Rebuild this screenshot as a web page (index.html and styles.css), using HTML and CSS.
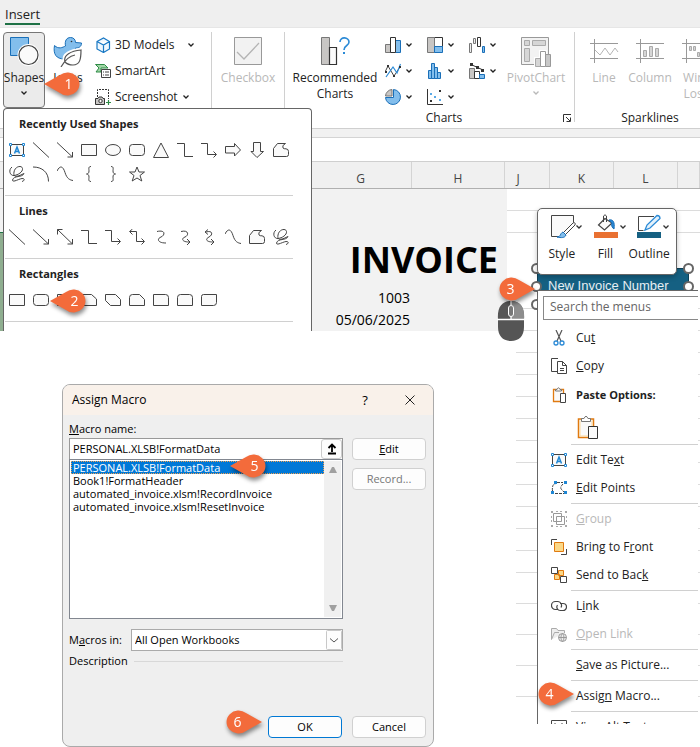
FILE: index.html
```html
<!DOCTYPE html>
<html lang="en">
<head>
<meta charset="utf-8">
<title>Assign a macro to a shape</title>
<link rel="stylesheet" href="styles.css">
</head>
<body>
<svg class="defs" aria-hidden="true">
  <symbol id="chev" viewBox="0 0 8 6"><path d="M1.500 1.500 4 4l2.500-2.500" fill="none" stroke="currentColor" stroke-width="1.300"/></symbol>
  <symbol id="line" viewBox="0 0 16 16"><path d="M0 0.500 16 15.500"/></symbol>
  <symbol id="arrow" viewBox="0 0 16 16"><path d="M0 .5 15.500 15M15.500 10v5h-5"/></symbol>
  <symbol id="arrow2" viewBox="0 0 16 16"><path d="M.5.5 15.500 15M15.500 10v5h-5M.5 5.500v-5h5"/></symbol>
  <symbol id="rect" viewBox="0 0 16 16"><path class="f" d="M.5 2.500h15v11H.5z"/></symbol>
  <symbol id="oval" viewBox="0 0 16 16"><ellipse class="f" cx="8" cy="8" rx="7.500" ry="5.500"/></symbol>
  <symbol id="round" viewBox="0 0 16 16"><rect class="f" x=".5" y="2.500" width="15" height="11" rx="3"/></symbol>
  <symbol id="tri" viewBox="0 0 16 16"><path class="f" d="M8 1 15.500 15.500H.5z"/></symbol>
  <symbol id="elbow" viewBox="0 0 16 16"><path d="M0 1.500h7.500v13H16"/></symbol>
  <symbol id="elbowA" viewBox="0 0 16 16"><path d="M0 1.500h6.500v11H15M12.500 9.500l3 3-3 3"/></symbol>
  <symbol id="elbowB" viewBox="0 0 16 16"><path d="M1 2.500h6.500v10H15M12.500 9.500l3 3-3 3M3.500 0 .5 2.500l3 3"/></symbol>
  <symbol id="rarrow" viewBox="0 0 16 16"><path class="f" d="M.5 4.500h9v-3L15.500 8l-6 6v-3h-9z"/></symbol>
  <symbol id="darrow" viewBox="0 0 16 16"><path class="f" d="M4.500.5h7v9h3L8 15.500l-6-6h2.500z"/></symbol>
  <symbol id="free" viewBox="0 0 16 16"><path class="f" d="M.5 14.500V6.500L4.500 1.500h8q-4 2-2.500 4.500 1 1 3 .8 2.500.2 2.500 2.700v3q0 2-2 2z"/></symbol>
  <symbol id="scrib" viewBox="0 0 16 16"><path d="M3 1C-1 4 1 10 5 9.500S14 6 13.500 2.500 6 0 5 6s3 5 10 1.500M15 7.500C13 12 5 9 3.500 14c0 3 6-1 9.500-1.500 3 0 3 2 0 3"/></symbol>
  <symbol id="arc" viewBox="0 0 16 16"><path d="M0 1c9 0 15.500 5 15.500 14.500"/></symbol>
  <symbol id="curve" viewBox="0 0 16 16"><path d="M0 5C3-1 6 0 8 6.500S13 14 16 14.500"/></symbol>
  <symbol id="lbrace" viewBox="0 0 16 16"><path d="M10 .5C7 .5 8 3 8 5S7 8 5.500 8C7 8 8 9 8 11s-1 4.500 2 4.500"/></symbol>
  <symbol id="rbrace" viewBox="0 0 16 16"><path d="M6 .5C9 .5 8 3 8 5s1 3 2.500 3C9 8 8 9 8 11s1 4.500-2 4.500"/></symbol>
  <symbol id="star" viewBox="0 0 16 16"><path class="f" d="M8 1l2 5h5.500l-4.500 3.500 1.800 5.500L8 12l-4.800 3L5 9.500.5 6H6z"/></symbol>
  <symbol id="scon" viewBox="0 0 16 16"><path d="M4 2.500c9-2 8 4 4 5.500s-4 6 5 6"/></symbol>
  <symbol id="sconA" viewBox="0 0 16 16"><path d="M4 2.500c8-2 8 4 4 5.500s-3 5 4 5M10 10l3 3-3 3"/></symbol>
  <symbol id="sconB" viewBox="0 0 16 16"><path d="M5 3c7-2 7 3 3 5s-3 5 4 5M10 10l3 3-3 3M7 .5l-3 2.500 3 2.500"/></symbol>
  <symbol id="snip1" viewBox="0 0 16 16"><path class="f" d="M.5 2.500h10l5 4.500v6.500H.5z"/></symbol>
  <symbol id="snip2" viewBox="0 0 16 16"><path class="f" d="M.5 2.500h10l5 5v6h-10l-5-5z"/></symbol>
  <symbol id="snipr" viewBox="0 0 16 16"><path class="f" d="M3.500 2.500h7l5 5v6H.5v-8q0-3 3-3z"/></symbol>
  <symbol id="rnd1" viewBox="0 0 16 16"><path class="f" d="M.5 2.500h12q3 0 3 3v8H.5z"/></symbol>
  <symbol id="rnd2" viewBox="0 0 16 16"><path class="f" d="M3.500 2.500h9q3 0 3 3v8H.5v-8q0-3 3-3z"/></symbol>
  <symbol id="rnd3" viewBox="0 0 16 16"><path class="f" d="M2.500 2.500h13v8q0 3-3 3h-12v-9q0-2 2-2z"/></symbol>
  <symbol id="textbox" viewBox="0 0 16 16"><path d="M1.500 2.500h13v11h-13z" fill="#fafafa" stroke="#444"/><path d="M5.500 11.500 8 5l2.500 6.500M6.500 9.500h3" fill="none" stroke="#1f87d4" stroke-width="1.500"/><path d="M.5 1.500h2v2h-2zM13.500 1.500h2v2h-2zM.5 12.500h2v2h-2zM13.500 12.500h2v2h-2z" fill="#fff" stroke="#1f87d4"/></symbol>
  <symbol id="tipLeft" viewBox="0 0 37 24"><path d="M0 12 16 3a12 11.500 0 1 1 0 18z" fill="#f36b3b"/></symbol>
  <symbol id="tipRight" viewBox="0 0 37 24"><path d="M37 12 21 3a12 11.500 0 1 0 0 18z" fill="#f36b3b"/></symbol>
</svg>

<div class="workbook">
  <nav class="tabs"><a href="#insert" class="tab">Insert</a></nav>

  <div class="ribbon" id="insert">
    <section class="group illus">
      <div class="tools">
        <button class="big picked">
          <svg class="i30" viewBox="0 0 30 30"><path d="M1.500.5h18v18h-18z" fill="#83beec" stroke="#1a6fb8"/><circle cx="19.500" cy="18" r="11" fill="#fff"/><circle cx="19.500" cy="18" r="9.500" fill="#fafafa" stroke="#444" stroke-width="1.200"/></svg>
          <span>Shapes</span><svg class="chev"><use href="#chev"/></svg>
        </button>
        <button class="big">
          <svg class="i30" viewBox="0 0 30 30"><path d="M1.500 8.500c4 4 8 2 11 .5-1-5 1-8.500 5-8.500 3 0 5 2 5 5l6 .5c0 4-3 5-6 5 3 9-5 12-11 11C3 22 0 17 1.500 8.500z" fill="#83beec" stroke="#1a6fb8"/><circle cx="18.500" cy="4.500" r=".8" fill="#333"/><path d="M12 25c-3-8 6-11 16-12 0 9-1 15-8 15-4 0-6-1-8-3z" fill="#fff" stroke="#fff" stroke-width="4"/><path d="M8 30c4-7 8-11 14-12M12 25c-2-7 6-11 16-12 0 9-1 15-8 15-4 0-6-1-8-3z" fill="none" stroke="#555" stroke-width="1.200"/></svg>
          <span>Icons</span>
        </button>
        <div class="stack">
          <button class="row wide"><svg class="i16" viewBox="0 0 16 16"><path d="M2 4.500 8.500 1l6 3.500v7.500L8.500 15.500 2 12zM2 4.500l6.500 3.500 6-3.500M8.500 8v7.500" fill="#eff7fd" stroke="#1878c4" stroke-width="1.200"/></svg><span>3D Models</span><svg class="chev"><use href="#chev"/></svg></button>
          <button class="row"><svg class="i16" viewBox="0 0 16 16"><path d="M.5 1.500h9L13 5H6v4H1l3-4z" fill="#9fd5a5" stroke="#2e8b46"/><path d="M6.500 6.500h9v8h-9z" fill="#fff" stroke="#444"/><path d="M8 9h1M10 9h4M8 12h1M10 12h4" stroke="#444"/></svg><span>SmartArt</span></button>
          <button class="row shot"><svg class="i16" viewBox="0 0 16 16"><path d="M2.500 8V.5h11V10" fill="none" stroke="#333" stroke-dasharray="2 1"/><path d="M.5 9.500H3l1-1.500h3l1 1.500h1.500v6h-9z" fill="#c8c6c4" stroke="#333"/><circle cx="5.500" cy="12" r="1.700" fill="#fff" stroke="#333"/><path d="M13.500 11v5M11 13.500h5" stroke="#2e8b46" stroke-width="1.200"/></svg><span>Screenshot</span><svg class="chev"><use href="#chev"/></svg></button>
        </div>
      </div>
    </section>
    <section class="group controls">
      <div class="tools">
        <button class="big off" disabled><svg class="i30" viewBox="0 0 30 30"><path d="M1.500.5h27v27h-27z" fill="#f2f2f2" stroke="#999"/><path d="M4 15l7 7L26 6" fill="none" stroke="#b4b4b4" stroke-width="1.300"/></svg><span>Checkbox</span></button>
      </div>
    </section>
    <section class="group charts">
      <div class="tools">
        <button class="big rec"><svg class="i30" viewBox="0 0 30 30"><path d="M1.500.5h8v27h-8z" fill="#c8c6c4" stroke="#777"/><path d="M9.500 10.500h7v17h-7z" fill="#fafafa" stroke="#333" stroke-width="1.200"/><path d="M20 5c0-6 9-5 9 0 0 4-5 3-5 8" fill="none" stroke="#2b8ad6" stroke-width="1.600"/><path d="M23 15h2v2h-2z" fill="#2b8ad6"/></svg><span>Recommended<br>Charts</span></button>
        <div class="minis">
          <button aria-label="Column chart"><svg class="i16" viewBox="0 0 16 16"><path d="M.5 7.500h5v8h-5z" fill="#c8c6c4" stroke="#777"/><path d="M10.500 3.500h5v12h-5z" fill="#83beec" stroke="#1a6fb8"/><path d="M5.500.5h5v15h-5z" fill="#fff" stroke="#333"/></svg><svg class="chev"><use href="#chev"/></svg></button>
          <button aria-label="Hierarchy chart"><svg class="i16" viewBox="0 0 16 16"><path d="M7.500.5h8v9h-8z" fill="#fff" stroke="#333"/><path d="M.5.5h7v15h-7z" fill="#c8c6c4" stroke="#777"/><path d="M7.500 9.500h8v6h-8z" fill="#83beec" stroke="#1a6fb8"/></svg><svg class="chev"><use href="#chev"/></svg></button>
          <button aria-label="Waterfall chart"><svg class="i16" viewBox="0 0 16 16"><path d="M.5 6.500h2v9h-2zM4.500 1.500h2v5h-2z" fill="#eee" stroke="#777"/><path d="M8.500.5h3v9h-3z" fill="#fff" stroke="#333"/><path d="M13.500 9.500h2v6h-2z" fill="#83beec" stroke="#1a6fb8"/></svg><svg class="chev"><use href="#chev"/></svg></button>
          <button aria-label="Line chart"><svg class="i16" viewBox="0 0 16 16"><path d="M.5 8 3 3l6 10 6-9" fill="none" stroke="#444"/><path d="M1 14 8 4l4 6 3.500-9" fill="none" stroke="#2b8ad6" stroke-width="1.200"/><path d="M2 2h2v2H2zM8 12h2v2H8zM14 3h2v2h-2zM0 8h2v2H0z" fill="#333"/></svg><svg class="chev"><use href="#chev"/></svg></button>
          <button aria-label="Histogram"><svg class="i16" viewBox="0 0 16 16"><path d="M1.500 7.500h3v8h-3zM4.500.5h3v15h-3zM7.500 4.500h3v11h-3zM10.500 9.500h3v6h-3z" fill="#83beec" stroke="#1a6fb8"/></svg><svg class="chev"><use href="#chev"/></svg></button>
          <button aria-label="Combo chart"><svg class="i16" viewBox="0 0 16 16"><path d="M.5 5.500h5v10h-5z" fill="#c8c6c4" stroke="#777"/><path d="M5.500 8.500h5v7h-5z" fill="#fff" stroke="#333"/><path d="M10.500 11.500h5v4h-5z" fill="#83beec" stroke="#1a6fb8"/><path d="M2 1.500 14 7" stroke="#333"/><path d="M1 0h3v3H1zM7 3h3v3H7zM12 6h3v3h-3z" fill="#333"/></svg><svg class="chev"><use href="#chev"/></svg></button>
          <button aria-label="Pie chart"><svg class="i16" viewBox="0 0 16 16"><path d="M8.500.5a7.500 7.500 0 1 1-8 8h8z" fill="#83beec" stroke="#1a6fb8"/><path d="M7.500-1v9H-1V-1z" fill="#fff"/><path d="M7 .5A7 7 0 0 0 .5 7H7z" fill="#c8c6c4" stroke="#777"/></svg><svg class="chev"><use href="#chev"/></svg></button>
          <button aria-label="Scatter chart"><svg class="i16" viewBox="0 0 16 16"><path d="M.5 0v15.500H16" fill="none" stroke="#333"/><path d="M12 1h2v2h-2zM3 11h2v2H3z" fill="#333"/><path d="M3 4h2v2H3zM7 7h2v2H7zM12 10h2v2h-2z" fill="#5aa9e6"/></svg><svg class="chev"><use href="#chev"/></svg></button>
        </div>
        <button class="big pivot off" disabled><svg class="i30" viewBox="0 0 30 30"><path d="M.5.5h27v27H.5z" fill="#f2f2f2" stroke="#999"/><path d="M3.500 3.500h5v5h-5zM11.500 3.500h13v5h-13zM3.500 11.500h5v13h-5z" fill="#d6d6d6" stroke="#aaa"/><path d="M13 20h5v-7h8v4h4v13H13z" fill="#fff"/><path d="M14.500 21.500h5v8h-5z" fill="#d6d6d6" stroke="#aaa"/><path d="M24.500 17.500h5v12h-5z" fill="#c8c8c8" stroke="#999"/><path d="M19.500 14.500h5v15h-5z" fill="#fff" stroke="#999"/></svg><span>PivotChart</span><svg class="chev"><use href="#chev"/></svg></button>
      </div>
      <footer><span>Charts</span><button class="launch" aria-label="Chart options"><svg viewBox="0 0 8 8"><path d="M.5 8V.5H8M3 3l4 4M7.500 3.500v4h-4" fill="none" stroke="#333"/></svg></button></footer>
    </section>
    <section class="group sparks">
      <div class="tools">
        <button class="big off" disabled><svg class="i30" viewBox="0 0 30 30"><path d="M1 6.500h28M1 21.500h28M5.500 2v24" stroke="#999" fill="none"/><path d="M6 13l5 5 5-7 5 7 5-7 3 4" fill="none" stroke="#b5b5b5"/></svg><span>Line</span></button>
        <button class="big off" disabled><svg class="i30" viewBox="0 0 30 30"><path d="M1 6.500h28M1 21.500h28M5.500 2v24" stroke="#999" fill="none"/><path d="M8.500 13.500h3v6h-3zM14.500 9.500h3v10h-3zM20.500 11.500h3v8h-3z" fill="#d6d6d6" stroke="#aaa"/></svg><span>Column</span></button>
        <button class="big off" disabled><svg class="i30" viewBox="0 0 30 30"><path d="M1 6.500h28M1 21.500h28M5.500 2v24" stroke="#999" fill="none"/><path d="M8.500 9.500h2v4h-2zM12.500 9.500h2v4h-2zM16.500 15.500h2v4h-2z" fill="#d6d6d6" stroke="#aaa"/></svg><span>Win/<br>Loss</span></button>
      </div>
      <footer><span>Sparklines</span></footer>
    </section>
  </div>

  <div class="formula"></div>
  <div class="heads"><span></span><span>G</span><span>H</span><span>J</span><span>K</span><span>L</span><span></span></div>

  <div class="sheet">
    <div class="left">
      <div class="invoice">
        <div class="edge"></div>
        <p class="title">INVOICE</p>
        <p class="val">1003</p>
        <p class="val">05/06/2025</p>
      </div>

      <section class="dialog" role="dialog" aria-labelledby="dlg">
        <header><h2 id="dlg">Assign Macro</h2><button aria-label="Help">?</button><button aria-label="Close"><svg viewBox="0 0 10 10"><path d="M.5.5l9 9M9.500.5l-9 9" stroke="#222" fill="none"/></svg></button></header>
        <div class="body">
          <div class="form">
            <label for="name"><u>M</u>acro name:</label>
            <div class="namebox"><input id="name" value="PERSONAL.XLSB!FormatData"><button aria-label="Collapse"><svg viewBox="0 0 10 12"><path d="M5 9V2M1.500 5 5 1.500 8.500 5M1 10.500h8" stroke="#000" stroke-width="1.800" fill="none"/></svg></button></div>
            <div class="list">
              <div class="options" role="radiogroup" aria-label="Macros">
                <label><input type="radio" name="macro" checked>PERSONAL.XLSB!FormatData</label>
                <label><input type="radio" name="macro">Book1!FormatHeader</label>
                <label><input type="radio" name="macro">automated_invoice.xlsm!RecordInvoice</label>
                <label><input type="radio" name="macro">automated_invoice.xlsm!ResetInvoice</label>
              </div>
              <div class="bar"><svg viewBox="0 0 8 6"><path d="M3 0h2l3 6H0z" fill="#a0a0a0"/></svg><svg viewBox="0 0 8 6"><path d="M0 0h8L5 6H3z" fill="#a0a0a0"/></svg></div>
            </div>
            <div class="where"><label for="in">M<u>a</u>cros in:</label><div class="combo"><select id="in"><option>All Open Workbooks</option></select><svg viewBox="0 0 16 20"><rect x=".5" y=".5" width="15" height="19" rx="1" fill="#fdfdfd" stroke="#c8c8c8"/><path d="M4 8.500 8 12l4-3.500" fill="none" stroke="#555"/></svg></div></div>
            <div class="desc">Description</div>
          </div>
          <div class="side"><button><span><u>E</u>dit</span></button><button disabled>Record...</button></div>
          <div class="actions"><button class="ok">OK</button><button>Cancel</button></div>
        </div>
        <div class="call c5"><svg><use href="#tipLeft"/></svg><b>5</b></div>
        <div class="call right c6"><svg><use href="#tipRight"/></svg><b>6</b></div>
      </section>
    </div>
    <div class="grid">
      <i></i><i></i><i class="tall"></i><i></i>
      <div class="lower"><i></i><i></i><i></i><i></i><i></i><i></i><i></i><i></i><i></i><i></i><i></i><i class="mid"></i><i class="mid"></i><i class="mid"></i><i class="mid"></i></div>
    </div>
  </div>

  <div class="shapes">
    <h3>Recently Used Shapes</h3>
    <div class="pics"><svg><use href="#textbox"/></svg><svg><use href="#line"/></svg><svg><use href="#arrow"/></svg><svg><use href="#rect"/></svg><svg><use href="#oval"/></svg><svg><use href="#round"/></svg><svg><use href="#tri"/></svg><svg><use href="#elbow"/></svg><svg><use href="#elbowA"/></svg><svg><use href="#rarrow"/></svg><svg><use href="#darrow"/></svg><svg><use href="#free"/></svg><svg><use href="#scrib"/></svg><svg><use href="#arc"/></svg><svg><use href="#curve"/></svg><svg><use href="#lbrace"/></svg><svg><use href="#rbrace"/></svg><svg><use href="#star"/></svg></div>
    <h3>Lines</h3>
    <div class="pics"><svg><use href="#line"/></svg><svg><use href="#arrow"/></svg><svg><use href="#arrow2"/></svg><svg><use href="#elbow"/></svg><svg><use href="#elbowA"/></svg><svg><use href="#elbowB"/></svg><svg><use href="#scon"/></svg><svg><use href="#sconA"/></svg><svg><use href="#sconB"/></svg><svg><use href="#curve"/></svg><svg><use href="#free"/></svg><svg><use href="#scrib"/></svg></div>
    <h3>Rectangles</h3>
    <div class="pics"><svg><use href="#rect"/></svg><svg><use href="#round"/></svg><svg><use href="#rect"/></svg><svg><use href="#snip1"/></svg><svg><use href="#snip2"/></svg><svg><use href="#snipr"/></svg><svg><use href="#rnd1"/></svg><svg><use href="#rnd2"/></svg><svg><use href="#rnd3"/></svg></div>
  </div>

  <div class="shape">New Invoice Number<i class="h tl"></i><i class="h ml"></i><i class="h bl"></i><i class="h tr"></i><i class="h mr"></i></div>

  <div class="minibar">
    <button><svg class="pic" viewBox="0 0 32 26"><path d="M23.500 10V1.500h-22v21H9" fill="#fafafa" stroke="#444"/><path d="M23 9 13.500 18.500l2 2L25 11c1-2-1-3-2-2z" fill="#fff" stroke="#444"/><path d="M7 23c4 0 3-4 6-5l3 3c-1 3-5 3-9 2z" fill="#83beec" stroke="#1a6fb8"/><path d="M26.500 11.500 29 14l2.500-2.500" fill="none" stroke="#333" stroke-width="1.300"/></svg><span>Style</span></button>
    <button><svg class="pic" viewBox="0 0 32 26"><path d="M11 4.500 4.500 11l6 5L18 9z" fill="#fafafa" stroke="#444" stroke-width="1.200"/><path d="M9.500 8V2q1.500-2.500 3 0v6" fill="none" stroke="#444"/><path d="M15 6c4-1 6 2 5 9-2-1-3-4-2-6z" fill="#2b8ad6" stroke="#1a6fb8"/><path d="M0 18h24v6H0z" fill="#e97132"/><path d="M26.500 11.500 29 14l2.500-2.500" fill="none" stroke="#333" stroke-width="1.300"/></svg><span>Fill</span></button>
    <button><svg class="pic" viewBox="0 0 32 26"><path d="M17 2.500H1.500v14h5" fill="none" stroke="#444"/><path d="M8 16l2-5L20 1.500q3 0 3 3L13 14z" fill="#e3f1fb" stroke="#2b8ad6" stroke-width="1.300"/><path d="M0 18h24v6H0z" fill="#156082"/><path d="M26.500 11.500 29 14l2.500-2.500" fill="none" stroke="#333" stroke-width="1.300"/></svg><span>Outline</span></button>
  </div>

  <div class="menu">
    <input type="search" placeholder="Search the menus" aria-label="Search the menus">
    <button><svg viewBox="0 0 16 16"><path d="M5 0l5 11M11 0 6 11" fill="none" stroke="#555" stroke-width="1.200"/><circle cx="5" cy="13" r="2" fill="#fff" stroke="#2b8ad6" stroke-width="1.300"/><circle cx="11" cy="13" r="2" fill="#fff" stroke="#2b8ad6" stroke-width="1.300"/></svg><span>Cu<u>t</u></span></button>
    <button><svg viewBox="0 0 16 16"><path d="M6 13.500H.5V.5H7" fill="none" stroke="#444"/><path d="M6.500 3.500h5l4 4v8h-9zM11.500 3.500v4h4M9 10.500h4M9 12.500h4" fill="#fff" stroke="#444"/></svg><span><u>C</u>opy</span></button>
    <div class="paste"><svg viewBox="0 0 16 16"><path d="M2.500 2.500h10v12h-10z" fill="#fafafa" stroke="#e07a10" stroke-width="1.300"/><path d="M4.500 4V2.500H6q1.500-3.500 3 0h1.500V4z" fill="#fff" stroke="#777"/><path d="M9.500 6.500h5v9h-5z" fill="#fff" stroke="#444"/></svg><strong>Paste Options:</strong></div>
    <button class="pasteicon" aria-label="Paste"><svg viewBox="0 0 24 24"><path d="M2.500 4v18.500h15V4z" fill="#fafafa" stroke="#e07a10" stroke-width="1.500"/><path d="M4 5.500V21h12V5.500" fill="none" stroke="#fbd9a0"/><path d="M5.500 6.500v-3H8q2-4.500 4 0h2.500v3z" fill="#fff" stroke="#777"/><path d="M12.500 11.500h9v12h-9z" fill="#fafafa" stroke="#333"/></svg></button>
    <hr>
    <button><svg><use href="#textbox"/></svg><span>Edit Te<u>x</u>t</span></button>
    <button><svg viewBox="0 0 16 16"><path d="M1.500 11C1 6 2 4 5 3.500M6 2.500h6M12 4c-4 4-2 5 1 8M4 13.500h9" fill="none" stroke="#444" stroke-dasharray="3 1"/><path d="M3 1h3v3H3zM13 1h3v3h-3zM0 11h3v3H0zM13 11h3v3h-3z" fill="#1f87d4"/></svg><span><u>E</u>dit Points</span></button>
    <hr>
    <button class="off" disabled><svg viewBox="0 0 16 16"><path d="M2.500 2.500h8v8h-8zM5.500 5.500h8v8h-8z" fill="none" stroke="#999"/><path d="M0 0h2v2H0zM14 0h2v2h-2zM0 14h2v2H0zM14 14h2v2h-2zM5 0h2v1H5zM9 0h2v1H9zM0 5h1v2H0zM0 9h1v2H0zM15 5h1v2h-1zM15 9h1v2h-1zM5 15h2v1H5zM9 15h2v1H9z" fill="#aaa"/></svg><span><u>G</u>roup</span></button>
    <button><svg viewBox="0 0 16 16"><path d="M.5 6V.5H6M15.500 10v5.500H10" fill="none" stroke="#444"/><path d="M3.500 3.500h9v9h-9z" fill="#fbd888" stroke="#e07a10"/></svg><span>Bring to F<u>r</u>ont</span></button>
    <button><svg viewBox="0 0 16 16"><path d="M3.500 7.500h5v5h-5zM7.500 3.500h5v5h-5z" fill="#fbd888" stroke="#e07a10"/><path d="M.5.5h6v6h-6zM9.500 9.500h6v6h-6z" fill="#fff" stroke="#444"/></svg><span>Send to Bac<u>k</u></span></button>
    <hr>
    <button><svg viewBox="0 0 16 16"><path d="M7 11.500H4.500a4 4 0 0 1 0-8H7a4 4 0 0 1 3 6M9 5.500h3a3.500 3.500 0 0 1 0 7H9.500a3.500 3.500 0 0 1-3-5.500" fill="none" stroke="#444" stroke-width="1.200"/></svg><span>L<u>i</u>nk</span></button>
    <button class="off" disabled><svg viewBox="0 0 16 16"><path d="M.5 13.500v-11h5l1.500 2h6.500V7M.5 13.500 3.500 6.500H8" fill="#eee" stroke="#aaa"/><circle cx="11.500" cy="11.500" r="4" fill="#eee" stroke="#999"/><path d="M7.500 11.500h8M11.500 7.500c-2 2-2 6 0 8M11.500 7.500c2 2 2 6 0 8" fill="none" stroke="#999"/></svg><span><u>O</u>pen Link</span></button>
    <hr>
    <button><span><u>S</u>ave as Picture...</span></button>
    <hr>
    <button><span>Assig<u>n</u> Macro...</span></button>
    <hr>
    <button><svg viewBox="0 0 16 16"><path d="M.5 1.500h15v12H.5zM4 4v3M11 4v3" fill="none" stroke="#444"/></svg><span>View Alt Text...</span></button>
  </div>

  <svg class="mouse" viewBox="0 0 28 42"><path d="M1 20C0 7 5 1 14 1s14 6 13 19v7c0 9-5 14-13 14S1 36 1 27z" fill="#555"/><path d="M14 1c9 0 14 6 13 18H14z" fill="#8d8d8d"/><path d="M0 19.500h28M14 0v19" stroke="#fff" stroke-width="1.300" fill="none"/><rect x="11.500" y="5.500" width="5" height="11" rx="2.500" fill="#777" stroke="#fff"/></svg>
  <div class="call c1"><svg><use href="#tipLeft"/></svg><b>1</b></div>
  <div class="call c2"><svg><use href="#tipLeft"/></svg><b>2</b></div>
  <div class="call right c3"><svg><use href="#tipRight"/></svg><b>3</b></div>
  <div class="call right c4"><svg><use href="#tipRight"/></svg><b>4</b></div>
</div>
</body>
</html>
```
FILE: styles.css
```css
* { box-sizing: border-box; }
body { margin: 0; background: #fff; color: #222; font: 12px/16px "Open Sans", "Noto Sans", sans-serif; overflow: hidden; }
button, input, select { font: inherit; color: inherit; margin: 0; }
button { border: 0; background: none; padding: 0; }
h2, h3, p { margin: 0; font-weight: 400; }
.defs { position: absolute; width: 0; height: 0; }
.workbook { position: relative; overflow: hidden; }
.chev { width: 8px; height: 6px; flex: none; }
.i30 { width: 30px; height: 30px; }
.i16 { width: 16px; height: 16px; flex: none; }

/* Ribbon */
.tabs { height: 28px; padding: 4px 5px 0; background: #efefef; border-bottom: 1px solid #e6e6e6; }
.tab { display: inline-block; height: 21px; font-size: 13px; line-height: 20px; color: #222; text-decoration: none; border-bottom: 2px solid #1e7145; }
.ribbon { display: flex; height: 101px; padding-top: 4px; border-bottom: 1px solid #cfcfcf; overflow: hidden; }
.group { flex: none; border-right: 1px solid #d0d0d0; height: 90px; }
.tools { display: flex; height: 78px; }
.illus { width: 212px; padding-left: 3px; }
.controls { width: 73px; padding-left: 0; }
.charts { width: 290px; padding-left: 4px; }
.sparks { width: 150px; padding-left: 6px; border: 0; }
.big { display: flex; flex-direction: column; align-items: center; width: 42px; height: 76px; padding-top: 5px; }
.big span { margin-top: 3px; white-space: nowrap; }
.big .chev { margin-top: 4px; }
.picked { background: #ebebeb; border: 1px solid #777; border-radius: 4px; padding-top: 4px; }
.picked + .big { margin-left: 2px; }
.controls .big { width: 72px; }
.rec { width: 92px; margin-right: 4px; }
.pivot { width: 58px; }
.sparks .big { width: 46px; }
.off { color: #b8b8b8; }
.stack { margin-left: 6px; }
.row { display: flex; align-items: center; gap: 4px; height: 26px; }
.row.wide { gap: 4px; }
.row.wide .chev { margin-left: 8px; }
.minis { display: grid; grid-template-columns: 42px 42px 38px; grid-auto-rows: 26px; }
.minis button { display: flex; align-items: center; gap: 4px; }
.group footer { display: flex; align-items: center; height: 16px; text-align: center; }
.group footer span { flex: 1; }
.charts footer { padding: 0 3px 0 36px; }
.sparks footer { padding-right: 6px; }
.launch svg { display: block; width: 8px; height: 8px; }

/* Sheet */
.formula { height: 33px; border-top: 8px solid #f1f1f1; border-bottom: 1px solid #cfcfcf; background: linear-gradient(#d4d4d4 1px, #fff 1px); }
.heads { display: grid; grid-template-columns: 310px 102px 93px 45px 64px 64px 1fr; height: 27px; background: #f0f0f0; border-bottom: 1px solid #b0b0b0; color: #444; text-align: center; line-height: 34px; overflow: hidden; }
.heads span { border-right: 1px solid #d4d4d4; }
.heads span:nth-child(4) { padding-right: 18px; }
.sheet { display: grid; grid-template-columns: 507px 1fr; }
.invoice { position: relative; height: 142px; padding-top: 44px; background: #f2f2f2; color: #000; }
.edge { position: absolute; left: 0; top: 43px; bottom: 0; width: 4px; background: #8fae90; border-top: 1px solid #217346; }
.title { font-size: 36px; line-height: 54px; font-weight: 700; text-align: right; padding-right: 9px; }
.val { font-size: 14px; line-height: 22px; text-align: right; padding-right: 97px; }
.grid { display: flex; flex-direction: column; }
.grid i { display: block; height: 22px; border-bottom: 1px solid #dcdcdc; }
.grid .tall { height: 76px; }
.grid .mid { height: 31px; }
.lower { margin-left: 9px; }

/* Shape gallery */
.shapes { position: absolute; left: 3px; top: 108px; width: 309px; height: 223px; background: #fff; border: 1px solid #666; border-bottom: 0; border-radius: 4px 4px 0 0; overflow: hidden; }
.shapes h3 { padding: 7px 15px 0; font-size: 11px; font-weight: 700; line-height: 16px; }
.pics { display: grid; grid-template-columns: repeat(12, 24px); grid-auto-rows: 24px; margin: 6px 18px 7px 1px; padding-bottom: 9px; border-bottom: 1px solid #d0d0d0; }
.shapes .pics + h3 { padding-top: 0; }
.pics svg { width: 16px; height: 16px; margin: 4px; fill: none; stroke: #444; }
.f { fill: #fafafa; }

/* Selected shape */
.shape { position: absolute; left: 537px; top: 268px; width: 152px; height: 37px; padding: 9px 10px; background: #156082; border: 1px solid #0d3f56; color: #e6eef2; font: 13px/16px "Liberation Sans", sans-serif; white-space: nowrap; }
.h { position: absolute; width: 11px; height: 11px; border: 2px solid #666; border-radius: 50%; background: #fff; }
.tl { left: -7px; top: -6px; } .ml { left: -7px; top: 12px; } .bl { left: -7px; top: 30px; }
.tr { right: -6px; top: -6px; } .mr { right: -6px; top: 12px; }

.minibar { position: absolute; left: 537px; top: 208px; width: 140px; height: 67px; display: flex; padding: 5px 5px 0 2px; background: #fff; border: 1px solid #666; border-radius: 5px; box-shadow: 0 2px 5px rgba(0,0,0,.25); }
.minibar button { flex: 1; display: flex; flex-direction: column; align-items: center; }
.minibar .pic { width: 32px; height: 26px; margin-left: 8px; }
.minibar span { margin-top: 6px; }

/* Context menu */
.menu { position: absolute; left: 537px; right: 2px; top: 290px; height: 434px; overflow: hidden; background: #fff; border: 1px solid #666; border-width: 1px 0 0 1px; padding-top: 5px; }
.menu input { display: block; width: calc(100% - 5px); height: 24px; margin: 0 0 4px 5px; padding: 0 6px 3px; border: 1px solid #888; border-right: 0; background: #fff; outline: 0; appearance: none; }
.menu input::placeholder { color: #666; }
.menu button, .paste { display: flex; align-items: center; width: 100%; height: 28px; padding-left: 38px; text-align: left; white-space: nowrap; }
.menu svg { width: 16px; height: 16px; margin: 0 9px 0 -25px; flex: none; }
.menu .paste { height: 30px; font-size: 11px; }
.menu .pasteicon { height: 33px; }
.menu .pasteicon svg { width: 24px; height: 24px; margin: 0; }
.menu hr { height: 1px; margin: 1px 0 1px 33px; border: 0; background: #d0d0d0; }

/* Dialog */
.dialog { position: relative; width: 372px; margin: 53px 0 0 62px; background: #efefef; border: 1px solid #aaa; border-radius: 8px; color: #000; font-size: 11px; line-height: 14px; }
.dialog header { display: flex; align-items: center; height: 30px; padding: 0 18px 0 9px; background: #f9f1ea; border-radius: 7px 7px 0 0; }
.dialog h2 { flex: 1; font-size: 12px; }
.dialog header button { width: 10px; margin-left: 35px; font-size: 13px; }
.dialog header svg { display: block; width: 10px; height: 10px; }
.body { display: grid; grid-template-columns: 274px 74px; column-gap: 9px; padding: 7px 6px 8px; }
.form label { display: block; }
.namebox { display: flex; height: 21px; margin-top: 2px; border: 1px solid #999; border-bottom: 0; background: #fff; }
.namebox input { flex: 1; min-width: 0; border: 0; padding: 0 3px; outline: 0; background: none; }
.namebox button { width: 21px; border: 1px solid #ccc; border-radius: 3px; background: #fdfdfd; display: grid; place-items: center; }
.namebox svg { width: 10px; height: 12px; }
.list { display: flex; height: 160px; border: 1px solid #828790; padding: 1px; background: #fff; }
.options { flex: 1; min-width: 0; }
.options label { height: 13px; line-height: 13px; padding: 0 2px; white-space: nowrap; }
.options input { position: absolute; appearance: none; width: 0; height: 0; }
.options label:has(:checked) { background: #0078d7; color: #fff; outline: 1px dotted #f0a050; outline-offset: -1px; }
.bar { width: 17px; display: flex; flex-direction: column; justify-content: space-between; align-items: center; padding: 6px 0; background: #f0f0f0; }
.bar svg { width: 8px; height: 6px; }
.where { display: flex; align-items: center; margin-top: 10px; }
.where label { width: 62px; }
.combo { position: relative; flex: 1; height: 22px; }
.combo select { width: 100%; height: 22px; appearance: none; border: 1px solid #aaa; border-radius: 0; padding: 0 3px; background: #fff; }
.combo svg { position: absolute; right: 1px; top: 1px; width: 16px; height: 20px; pointer-events: none; }
.desc { display: flex; align-items: center; gap: 6px; margin-top: 3px; }
.desc::after { content: ""; flex: 1; height: 1px; background: #d8d8d8; }
.side { display: flex; flex-direction: column; gap: 8px; padding-top: 16px; }
.side button, .actions button { width: 74px; height: 22px; border: 1px solid #d0d0d0; border-radius: 4px; background: #fdfdfd; }
.side button:disabled { color: #777; }
.actions { grid-column: 1 / -1; display: flex; justify-content: flex-end; gap: 10px; margin-top: 48px; }
.actions .ok { border-color: #0078d4; }

/* Numbered callouts */
.call { position: absolute; width: 37px; height: 24px; filter: drop-shadow(1px 3px 2px rgba(0,0,0,.45)); }
.call svg { display: block; width: 37px; height: 24px; }
.call b { position: absolute; inset: 0 0 0 12px; font: 14px/24px "Open Sans", sans-serif; text-align: center; color: #fff; }
.call.right b { inset: 0 12px 0 0; }
.c1 { left: 44px; top: 72px; }
.c2 { left: 50px; top: 289px; }
.c3 { left: 498px; top: 277px; }
.c4 { left: 537px; top: 682px; }
.c5 { left: 167px; top: 69px; }
.c6 { left: 162px; top: 325px; }
.mouse { position: absolute; left: 497px; top: 300px; width: 28px; height: 42px; }
```
